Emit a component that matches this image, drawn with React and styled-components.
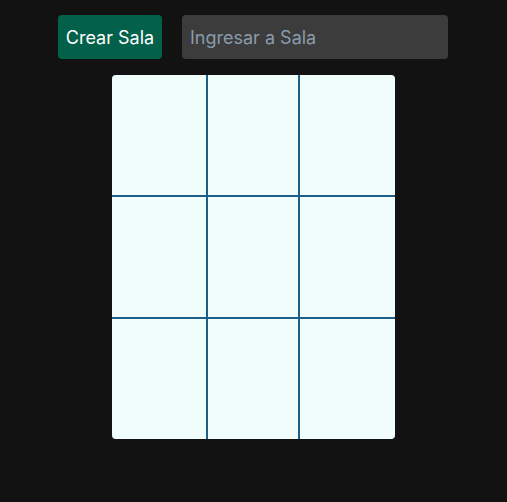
import styled, { createGlobalStyle } from "styled-components";

const GlobalStyle = createGlobalStyle`
  body {
    margin: 0;
    background: #121212;
    font-family: Inter, "Noto Sans", sans-serif;
  }
`;

const App = () => {
  const cells = Array.from({ length: 9 });
  return (
    <Layout>
      <GlobalStyle />
      <Toolbar>
        <BtnCreate>Crear Sala</BtnCreate>
        <InputRoom placeholder="Ingresar a Sala" />
      </Toolbar>
      <Board>
        {cells.map((_, i) => (
          <Cell key={i} />
        ))}
      </Board>
    </Layout>
  );
};

const Layout = styled.div`
  min-height: 100vh;
  display: flex;
  flex-direction: column;
  align-items: center;
  padding-top: 15px;
  box-sizing: border-box;
`;
const Toolbar = styled.div`
  display: flex;
  gap: 20px;
  margin-right: 1px;
`;
const BtnCreate = styled.button`
  width: 104px;
  height: 44px;
  border: none;
  border-radius: 4px;
  background: #03604a;
  color: #fff;
  font-family: Inter, sans-serif;
  font-size: 18px;
  padding: 0;
  cursor: pointer;
`;
const InputRoom = styled.input`
  width: 266px;
  height: 44px;
  box-sizing: border-box;
  border: none;
  border-radius: 4px;
  background: #3c3c3c;
  color: #fff;
  font-family: Inter, sans-serif;
  font-size: 18px;
  padding: 0 8px;
  outline: none;
  &::placeholder {
    color: #8a9bab;
    opacity: 1;
  }
`;
const Board = styled.div`
  margin-top: 16px;
  width: 283px;
  height: 364px;
  display: grid;
  grid-template-columns: 94px 90px 95px;
  grid-template-rows: repeat(3, 1fr);
  gap: 2px;
  background: #1b5f8b;
  border-radius: 4px;
  overflow: hidden;
`;
const Cell = styled.div`
  background: #f0fdfa;
`;

export default App;
